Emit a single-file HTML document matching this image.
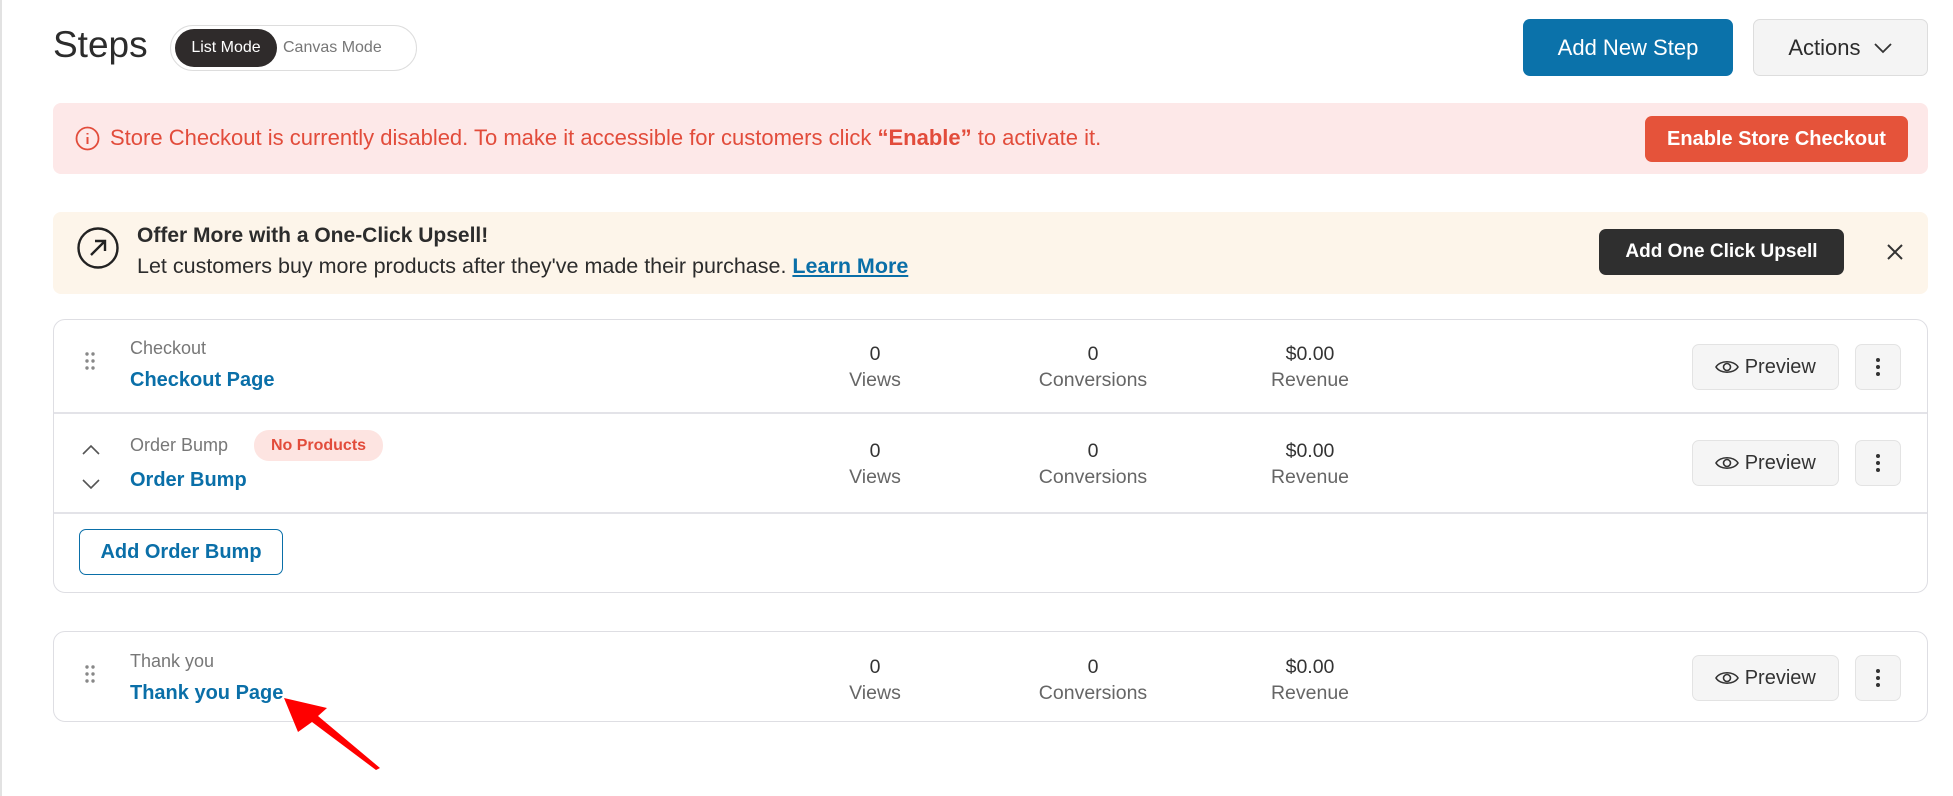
<!DOCTYPE html>
<html><head><meta charset="utf-8"><style>
*{box-sizing:border-box;margin:0;padding:0}
body{width:1953px;height:796px;background:#fff;font-family:"Liberation Sans",sans-serif;position:relative;overflow:hidden;border-left:2px solid #e2e2e2}
.a{position:absolute}
.title{left:51px;top:24px;font-size:37px;color:#2c2c2c}
.tog{left:168px;top:25px;width:247px;height:46px;border:1px solid #ddd;border-radius:23px}
.tog .on{position:absolute;left:4px;top:3px;width:102px;height:38px;background:#2f2b2b;border-radius:19px;color:#fff;font-size:16px;line-height:38px;text-align:center}
.tog .off{position:absolute;left:112px;top:3px;line-height:38px;font-size:16px;color:#777}
.btn{display:flex;align-items:center;justify-content:center;border-radius:7px}
.stat{text-align:center;width:200px;font-size:19.5px;color:#666;line-height:26px}
.stat b{font-weight:normal;color:#333}
.card{left:51px;width:1875px;border:1.5px solid #dedee3;border-radius:12px}
.prev{width:147px;height:46px;background:#f5f5f5;border:1px solid #e3e3e3;font-size:20px;color:#333}
.keb{width:46px;height:46px;background:#f5f5f5;border:1px solid #e3e3e3}
.lbl{font-size:18px;color:#777}
.nm{font-size:20px;color:#0a6fa8}
</style></head><body>
<div class="a title">Steps</div>
<div class="a tog"><div class="on">List Mode</div><div class="off">Canvas Mode</div></div>
<div class="a btn" style="left:1521px;top:19px;width:210px;height:57px;background:#0b72aa;color:#fff;font-size:22px">Add New Step</div>
<div class="a btn" style="left:1751px;top:19px;width:175px;height:57px;background:#f4f4f4;border:1px solid #ddd;color:#2c2c2c;font-size:22px">Actions&nbsp;&nbsp;<svg width="20" height="12" viewBox="0 0 20 12"><path d="M2 2l8 8 8-8" fill="none" stroke="#333" stroke-width="1.8"/></svg></div>

<div class="a" style="left:51px;top:103px;width:1875px;height:71px;background:#fde8e8;border-radius:8px"></div>
<svg class="a" style="left:73px;top:126px" width="25" height="25" viewBox="0 0 25 25"><circle cx="12.5" cy="12.5" r="11" fill="none" stroke="#e24c3b" stroke-width="1.8"/><path d="M12.5 11v7M12.5 7v1.5" stroke="#e24c3b" stroke-width="2"/></svg>
<div class="a" style="left:108px;top:125px;font-size:22px;color:#e24c3b">Store Checkout is currently disabled. To make it accessible for customers click <b>“Enable”</b> to activate it.</div>
<div class="a btn" style="left:1643px;top:116px;width:263px;height:46px;background:#e5533a;color:#fff;font-size:20px;font-weight:bold">Enable Store Checkout</div>

<div class="a" style="left:51px;top:212px;width:1875px;height:82px;background:#fdf5ea;border-radius:8px"></div>
<svg class="a" style="left:74px;top:226px" width="44" height="44" viewBox="0 0 44 44"><circle cx="22" cy="22" r="19.5" fill="none" stroke="#222" stroke-width="2.4"/><path d="M15 29l14-14M19 15h10v10" fill="none" stroke="#222" stroke-width="2.4"/></svg>
<div class="a" style="left:135px;top:224px;font-size:21px;color:#2c2c2c;font-weight:bold">Offer More with a One-Click Upsell!</div>
<div class="a" style="left:135px;top:254px;font-size:21.5px;color:#2c2c2c">Let customers buy more products after they've made their purchase. <span style="color:#0a6fa8;text-decoration:underline;font-weight:bold">Learn More</span></div>
<div class="a btn" style="left:1597px;top:229px;width:245px;height:46px;background:#2f2f2f;color:#fff;font-size:19px;font-weight:bold">Add One Click Upsell</div>
<svg class="a" style="left:1884px;top:243px" width="18" height="18" viewBox="0 0 18 18"><path d="M2 2l14 14M16 2L2 16" stroke="#333" stroke-width="2"/></svg>

<div class="a card" style="top:319px;height:274px"></div>
<div class="a" style="left:52px;top:412px;width:1873px;height:2px;background:#e3e3e8"></div>
<div class="a" style="left:52px;top:512px;width:1873px;height:2px;background:#e3e3e8"></div>
<div class="a card" style="top:631px;height:91px"></div>

<svg class="a" style="left:82px;top:351px" width="12" height="20"><g fill="#888"><circle cx="3" cy="3" r="1.7"/><circle cx="9" cy="3" r="1.7"/><circle cx="3" cy="10" r="1.7"/><circle cx="9" cy="10" r="1.7"/><circle cx="3" cy="17" r="1.7"/><circle cx="9" cy="17" r="1.7"/></g></svg>
<div class="a lbl" style="left:128px;top:338px">Checkout</div>
<div class="a nm" style="left:128px;top:369px;font-weight:bold">Checkout Page</div>
<div class="a stat" style="left:773px;top:341px"><b>0</b><br>Views</div>
<div class="a stat" style="left:991px;top:341px"><b>0</b><br>Conversions</div>
<div class="a stat" style="left:1208px;top:341px"><b>$0.00</b><br>Revenue</div>
<div class="a btn prev" style="left:1690px;top:344px"><svg width="24" height="16" viewBox="0 0 24 16"><path d="M1 8C5 1 19 1 23 8 19 15 5 15 1 8z" fill="none" stroke="#333" stroke-width="1.6"/><circle cx="12" cy="8" r="3.5" fill="none" stroke="#333" stroke-width="1.6"/></svg>&nbsp;Preview</div>
<div class="a btn keb" style="left:1853px;top:344px"><svg width="4" height="18"><g fill="#333"><circle cx="2" cy="2" r="2"/><circle cx="2" cy="9" r="2"/><circle cx="2" cy="16" r="2"/></g></svg></div>

<svg class="a" style="left:79px;top:443px" width="20" height="50"><path d="M2 11l8-8 8 8M2 37l8 8 8-8" fill="none" stroke="#555" stroke-width="1.6"/></svg>
<div class="a lbl" style="left:128px;top:435px">Order Bump</div>
<div class="a" style="left:252px;top:430px;width:129px;height:31px;background:#fde4e1;border-radius:15px;color:#e24c3b;font-size:16px;font-weight:bold;text-align:center;line-height:31px">No Products</div>
<div class="a nm" style="left:128px;top:469px;font-weight:bold">Order Bump</div>
<div class="a stat" style="left:773px;top:438px"><b>0</b><br>Views</div>
<div class="a stat" style="left:991px;top:438px"><b>0</b><br>Conversions</div>
<div class="a stat" style="left:1208px;top:438px"><b>$0.00</b><br>Revenue</div>
<div class="a btn prev" style="left:1690px;top:440px"><svg width="24" height="16" viewBox="0 0 24 16"><path d="M1 8C5 1 19 1 23 8 19 15 5 15 1 8z" fill="none" stroke="#333" stroke-width="1.6"/><circle cx="12" cy="8" r="3.5" fill="none" stroke="#333" stroke-width="1.6"/></svg>&nbsp;Preview</div>
<div class="a btn keb" style="left:1853px;top:440px"><svg width="4" height="18"><g fill="#333"><circle cx="2" cy="2" r="2"/><circle cx="2" cy="9" r="2"/><circle cx="2" cy="16" r="2"/></g></svg></div>

<div class="a btn" style="left:77px;top:529px;width:204px;height:46px;border:1.5px solid #0a6fa8;color:#0a6fa8;font-size:20px;font-weight:bold">Add Order Bump</div>

<svg class="a" style="left:82px;top:664px" width="12" height="20"><g fill="#888"><circle cx="3" cy="3" r="1.7"/><circle cx="9" cy="3" r="1.7"/><circle cx="3" cy="10" r="1.7"/><circle cx="9" cy="10" r="1.7"/><circle cx="3" cy="17" r="1.7"/><circle cx="9" cy="17" r="1.7"/></g></svg>
<div class="a lbl" style="left:128px;top:651px">Thank you</div>
<div class="a nm" style="left:128px;top:682px;font-weight:bold">Thank you Page</div>
<div class="a stat" style="left:773px;top:654px"><b>0</b><br>Views</div>
<div class="a stat" style="left:991px;top:654px"><b>0</b><br>Conversions</div>
<div class="a stat" style="left:1208px;top:654px"><b>$0.00</b><br>Revenue</div>
<div class="a btn prev" style="left:1690px;top:655px"><svg width="24" height="16" viewBox="0 0 24 16"><path d="M1 8C5 1 19 1 23 8 19 15 5 15 1 8z" fill="none" stroke="#333" stroke-width="1.6"/><circle cx="12" cy="8" r="3.5" fill="none" stroke="#333" stroke-width="1.6"/></svg>&nbsp;Preview</div>
<div class="a btn keb" style="left:1853px;top:655px"><svg width="4" height="18"><g fill="#333"><circle cx="2" cy="2" r="2"/><circle cx="2" cy="9" r="2"/><circle cx="2" cy="16" r="2"/></g></svg></div>

<svg class="a" style="left:270px;top:690px" width="120" height="90" viewBox="0 0 120 90"><path d="M12 8L55 18 46 26 108 78 104 80 40 32 26 42z" fill="#f00"/></svg>
</body></html>
